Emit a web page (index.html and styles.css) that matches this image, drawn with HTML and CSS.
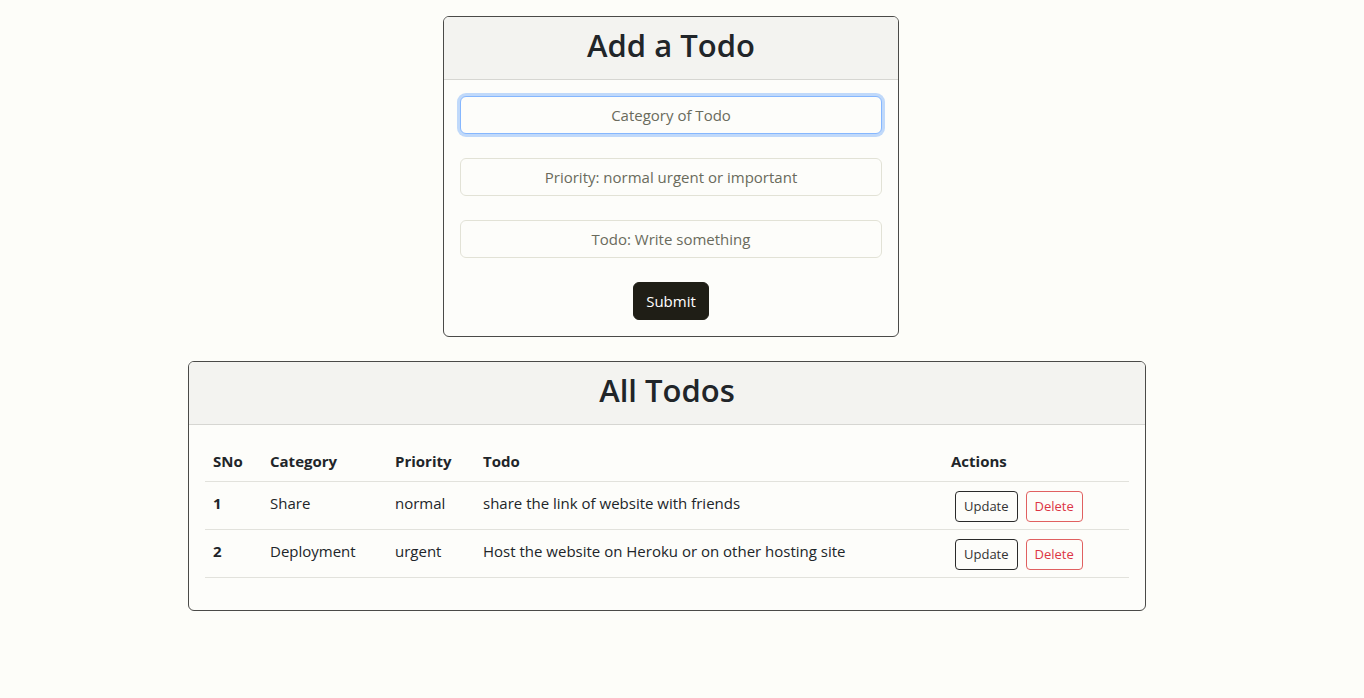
FILE: index.html
```html
<!DOCTYPE html>
<html lang="en">
<head>
<meta charset="utf-8">
<title>Todo</title>
<link rel="stylesheet" href="styles.css">
</head>
<body>
<div class="wrap">
  <div class="card card-add">
    <div class="card-header"><h2>Add a Todo</h2></div>
    <form class="card-body form">
      <input class="field focused" type="text" placeholder="Category of Todo">
      <input class="field" type="text" placeholder="Priority: normal urgent or important">
      <input class="field" type="text" placeholder="Todo: Write something">
      <div class="submit-row"><button type="button" class="btn btn-dark">Submit</button></div>
    </form>
  </div>

  <div class="card card-list">
    <div class="card-header"><h2>All Todos</h2></div>
    <div class="card-body">
      <table class="table">
        <thead>
          <tr><th class="c-sno">SNo</th><th class="c-cat">Category</th><th class="c-pri">Priority</th><th class="c-todo">Todo</th><th class="c-act">Actions</th></tr>
        </thead>
        <tbody>
          <tr>
            <th>1</th><td>Share</td><td>normal</td><td>share the link of website with friends</td>
            <td><div class="actions"><button class="btn-sm outline-dark">Update</button><button class="btn-sm outline-danger">Delete</button></div></td>
          </tr>
          <tr>
            <th>2</th><td>Deployment</td><td>urgent</td><td>Host the website on Heroku or on other hosting site</td>
            <td><div class="actions"><button class="btn-sm outline-dark">Update</button><button class="btn-sm outline-danger">Delete</button></div></td>
          </tr>
        </tbody>
      </table>
    </div>
  </div>
</div>
</body>
</html>
```
FILE: styles.css
```css
* { box-sizing: border-box; }
html, body { margin: 0; padding: 0; }
body {
  background: #fdfdf9;
  color: #212529;
  font-family: "Open Sans", "Noto Sans", sans-serif;
  font-size: 15px;
  line-height: 24px;
}
.wrap {
  width: 958px;
  margin: 16px 0 0 188px;
  display: flex;
  flex-direction: column;
}
.card {
  border: 1px solid #4a4a48;
  border-radius: 6px;
  background: #fdfdfa;
  overflow: hidden;
}
.card-add { width: 456px; margin-left: 255px; }
.card-list { width: 958px; margin-top: 24px; }
.card-header {
  background: #f3f3f0;
  border-bottom: 1px solid #d6d6d2;
  padding: 9px 16px 7px;
  text-align: center;
}
.card-header h2 {
  margin: 0 0 8px;
  font-size: 31px;
  font-weight: 600;
  line-height: 38px;
  color: #212529;
}
.card-body { padding: 16px; }
.form { display: flex; flex-direction: column; gap: 24px; }
.field {
  width: 100%;
  height: 38px;
  border: 1px solid #e2e2d6;
  border-radius: 6px;
  background: #fdfdfa;
  font: inherit;
  text-align: center;
  color: #212529;
  padding: 6px 12px;
  outline: none;
}
.field::placeholder { color: #6a6b5c; opacity: 1; }
.field.focused {
  border-color: #86b7fe;
  box-shadow: 0 0 0 3px rgba(13,110,253,.25);
}
.submit-row { display: flex; justify-content: center; }
.btn {
  font: inherit;
  border-radius: 6px;
  padding: 6px 12px;
  height: 38px;
  cursor: pointer;
}
.btn-dark { background: #1f1e16; color: #fff; border: 1px solid #1f1e16; }
.table {
  width: 100%;
  border-collapse: collapse;
  margin-bottom: 16px;
}
.table th, .table td {
  padding: 8px;
  text-align: left;
  vertical-align: top;
  border-bottom: 1px solid #e2e2dc;
}
.table tbody th, .table tbody td { padding-top: 9px; padding-bottom: 7px; }
.table thead th { font-weight: 700; }
.table tbody th { font-weight: 700; }
.c-sno { width: 57px; }
.c-cat { width: 125px; }
.c-pri { width: 88px; }
.c-act { width: 186px; }
.actions { display: flex; gap: 8px; padding-left: 4px; }
.btn-sm {
  font-family: inherit;
  font-size: 13px;
  line-height: 1.5;
  padding: 4px 8px;
  height: 31px;
  border-radius: 4px;
  background: transparent;
  cursor: pointer;
}
.outline-dark { border: 1px solid #2a2a2a; color: #333; }
.outline-danger { border: 1px solid #e06060; color: #dc3545; }
```
